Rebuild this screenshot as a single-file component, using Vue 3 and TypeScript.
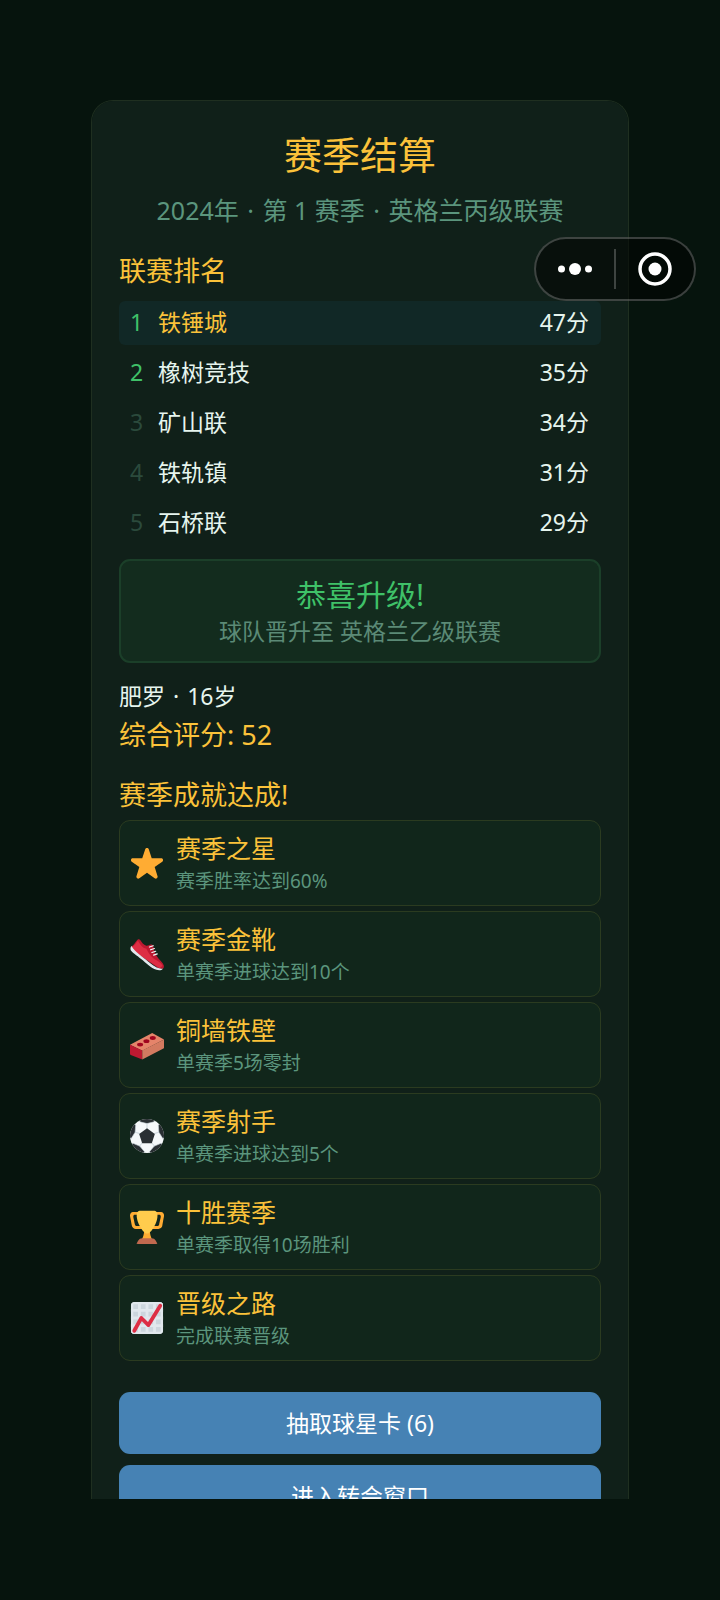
<script setup lang="ts">
interface Team {
  rank: number
  name: string
  points: number
}

interface Achievement {
  icon: 'star' | 'shoe' | 'brick' | 'ball' | 'trophy' | 'chart'
  title: string
  detail: string
}

const promotedPlaces = 2
const ownTeam = '铁锤城'

const teams: Team[] = [
  { rank: 1, name: '铁锤城', points: 47 },
  { rank: 2, name: '橡树竞技', points: 35 },
  { rank: 3, name: '矿山联', points: 34 },
  { rank: 4, name: '铁轨镇', points: 31 },
  { rank: 5, name: '石桥联', points: 29 },
]

const achievements: Achievement[] = [
  { icon: 'star', title: '赛季之星', detail: '赛季胜率达到60%' },
  { icon: 'shoe', title: '赛季金靴', detail: '单赛季进球达到10个' },
  { icon: 'brick', title: '铜墙铁壁', detail: '单赛季5场零封' },
  { icon: 'ball', title: '赛季射手', detail: '单赛季进球达到5个' },
  { icon: 'trophy', title: '十胜赛季', detail: '单赛季取得10场胜利' },
  { icon: 'chart', title: '晋级之路', detail: '完成联赛晋级' },
]

const gridLines = [2, 10, 18, 26, 34]
const patchAngles = [0, 72, 144, 216, 288]
</script>

<template>
  <div class="page">
    <main class="card">
      <h1 class="title">赛季结算</h1>
      <p class="subtitle">
        2024年 <span class="dot">·</span> 第 1 赛季 <span class="dot">·</span> 英格兰丙级联赛
      </p>

      <h2 id="standings-title" class="heading">联赛排名</h2>
      <table class="standings" aria-labelledby="standings-title">
        <tbody>
          <tr v-for="team in teams" :key="team.rank" :class="{ own: team.name === ownTeam }">
            <td class="rank" :class="{ promoted: team.rank <= promotedPlaces }">{{ team.rank }}</td>
            <td class="name">{{ team.name }}</td>
            <td class="points">{{ team.points }}分</td>
          </tr>
        </tbody>
      </table>

      <section class="promotion">
        <p class="promotion-title">恭喜升级!</p>
        <p class="promotion-text">球队晋升至 英格兰乙级联赛</p>
      </section>

      <p class="player">肥罗 <span class="dot">·</span> 16岁</p>
      <p class="rating">综合评分: 52</p>

      <h2 class="heading">赛季成就达成!</h2>
      <ul class="achievements">
        <li v-for="item in achievements" :key="item.title" class="achievement">
          <svg class="icon" viewBox="0 0 36 36" aria-hidden="true">
            <path
              v-if="item.icon === 'star'"
              fill="#ffac33"
              d="M27.287 34.627c-.404 0-.806-.124-1.152-.371L18 28.422l-8.135 5.834c-.343.247-.745.371-1.147.371-.408 0-.818-.127-1.166-.382-.69-.504-.981-1.396-.721-2.21l3.034-9.792-8.062-5.681c-.685-.505-.97-1.393-.708-2.203.264-.809 1.016-1.357 1.866-1.363L12.947 12.9l3.179-9.549c.268-.809 1.023-1.353 1.874-1.353.851 0 1.606.545 1.875 1.353L23 12.9l10.036.095c.853.005 1.605.554 1.869 1.363.262.81-.023 1.698-.709 2.203l-8.063 5.681 3.037 9.792c.261.814-.031 1.706-.72 2.21-.349.255-.757.383-1.163.383z"
            />
            <g v-else-if="item.icon === 'shoe'">
              <path
                fill="#be1931"
                d="M1.6 10C4 9 5.800 5 8 2.900c1-.9 2.200-.5 3 .6 1.400 2 3.200 5.200 6.300 5.700 2 .3 3.200-1.400 5.100-1.300 1.600.1 2.200 1.200 2.400 2.600.8 4.200 2.300 8.200 4.900 11.700 2 2.600 5 4.400 6 7.800.4 1.600.2 2.600-.8 3.600L30 33 2 13z"
              />
              <path
                fill="#dd2e44"
                d="M2 10.500C5 9.500 6.600 6 8.400 4c2 3.600 4.600 7.800 9 8.400 1.600 3.600 5 9 9.200 11.400 3.400 2 6.400 3.400 7.800 6.600l-2.800 2.800L5 16z"
              />
              <path
                fill="#e1e8ed"
                d="M1.700 9.600C.5 10.500.2 12.200.8 14c1.200 2.300 6.200 5.300 11 9.300 5.500 4.500 10.200 9.400 16.200 11.500 2.800.9 5.600.6 6.800-1.300-5 .6-10.500-3-15.300-7.200C13.500 21 4.300 15 1.700 9.600z"
              />
              <g fill="none" stroke="#f5f8fa" stroke-width="1.300" stroke-linecap="round">
                <path d="M20.600 10.600l4-1.300M21.800 13.500l4-1.300M23.200 16.400l4-1.300M25 19.200l3.800-1.300" />
              </g>
            </g>
            <g v-else-if="item.icon === 'brick'">
              <path fill="#e5846a" d="M0 17.800L23.500 5.200 36 12.200 13 24.200z" />
              <path fill="#be1931" d="M0 17.800l13 6V33.400L.8 28.500Q0 28.100 0 27.300z" />
              <path fill="#d37a60" d="M13 23.800l23-11.600v8.600q0 .6-.6.9L13 33.400z" />
              <g fill="#a0041e">
                <ellipse cx="10.700" cy="17.500" rx="3.200" ry="2" />
                <ellipse cx="17.400" cy="14" rx="3.200" ry="2" />
                <ellipse cx="24.100" cy="10.600" rx="3.200" ry="2" />
              </g>
            </g>
            <g v-else-if="item.icon === 'ball'">
              <clipPath id="ball-edge"><circle cx="18" cy="18" r="18" /></clipPath>
              <circle cx="18" cy="18" r="18" fill="#f5f8fa" />
              <g clip-path="url(#ball-edge)">
                <path
                  v-for="angle in patchAngles"
                  :key="angle"
                  fill="#292f33"
                  stroke="#ccd6dd"
                  stroke-width=".6"
                  :transform="`rotate(${angle} 18 18)`"
                  d="M18 11V4.800L10.500 3 9-3h18l-1.500 6L18 4.800z"
                />
                <path fill="#292f33" d="M18 9.700l8.300 6.100-3.200 9.800H12.900l-3.200-9.800z" />
              </g>
            </g>
            <g v-else-if="item.icon === 'trophy'">
              <path
                fill="#ffac33"
                d="M5.123 5h6C12.227 5 13 4.896 13 6V4c0-1.104-.773-2-1.877-2h-8c-2 0-3.583 2.125-3 5 0 0 1.791 9.375 1.917 9.958C2.373 18.500 4.164 20 6.081 20h6.958c1.105 0-.039-1.896-.039-3v-2c0 1.104-.773 2-1.877 2h-4c-1.104 0-1.833-1.042-2-2S3.539 7.667 3.539 7.667C3.206 5.750 4.018 5 5.123 5zm25.812 0h-6C23.831 5 22 4.896 22 6V4c0-1.104 1.831-2 2.935-2h8c2 0 3.584 2.125 3 5 0 0-1.633 9.419-1.771 10-.354 1.500-2.042 3-4 3h-7.146C21.914 20 22 18.104 22 17v-2c0 1.104 1.831 2 2.935 2h4c1.104 0 1.834-1.042 2-2s1.584-7.333 1.584-7.333C32.851 5.750 32.040 5 30.935 5zM15.100 20h5.800c0 8 3.200 12 3.200 12H11.900s3.200-4 3.200-12z"
              />
              <path
                fill="#ffcc4d"
                d="M7.100 6C7.100 2.400 8.200 1.100 11.100.9h14c2.900.2 4 1.500 4 5.100C29.100 13.200 22.300 25 18.100 25S7.100 13.200 7.100 6z"
              />
              <path fill="#c1694f" d="M28 36c.8 0 1-.5.700-1-1-1.600-1.700-5.200-5.700-5.200H13c-4 0-4.700 3.600-5.700 5.200-.3.500-.1 1 .7 1z" />
            </g>
            <g v-else>
              <clipPath id="chart-edge"><rect x="1" y="1" width="34" height="34" rx="4" /></clipPath>
              <g clip-path="url(#chart-edge)">
                <rect x="1" y="1" width="34" height="34" fill="#ccd6dd" />
                <g stroke="#e1e8ed" stroke-width="3">
                  <path v-for="at in gridLines" :key="at" :d="`M${at} 0v36M0 ${at}h36`" />
                </g>
              </g>
              <path
                fill="none"
                stroke="#dd2e44"
                stroke-width="4"
                stroke-linecap="round"
                stroke-linejoin="round"
                d="M4.500 31.500L12 18l7.500 7.500L32 5"
              />
            </g>
          </svg>
          <div>
            <h3 class="achievement-title">{{ item.title }}</h3>
            <p class="achievement-detail">{{ item.detail }}</p>
          </div>
        </li>
      </ul>

      <div class="actions">
        <button type="button" class="action">抽取球星卡 (6)</button>
        <button type="button" class="action">进入转会窗口</button>
      </div>
    </main>

    <div class="capsule">
      <button type="button" class="capsule-button" aria-label="更多">
        <svg width="36" height="16" viewBox="0 0 36 16" fill="#fff" aria-hidden="true">
          <circle cx="4.500" cy="8" r="3.500" />
          <circle cx="18" cy="8" r="6" />
          <circle cx="31.500" cy="8" r="3.500" />
        </svg>
      </button>
      <span class="capsule-divider"></span>
      <button type="button" class="capsule-button" aria-label="关闭">
        <svg width="36" height="36" viewBox="0 0 36 36" aria-hidden="true">
          <circle cx="18" cy="18" r="15" fill="none" stroke="#fff" stroke-width="3.500" />
          <circle cx="18" cy="18" r="6.500" fill="#fff" />
        </svg>
      </button>
    </div>
  </div>
</template>

<style>
body {
  margin: 0;
  background: #06140d;
}
</style>

<style scoped>
.page {
  box-sizing: border-box;
  position: relative;
  display: flex;
  flex-direction: column;
  height: 100vh;
  padding: 100px 91px 101px;
  background: #06140d;
  color: #e6f5ee;
  font-family: "Noto Sans", "Noto Sans CJK SC", sans-serif;
  font-size: 23px;
}

h1,
h2,
h3,
p,
ul {
  margin: 0;
  padding: 0;
  font-weight: 400;
}

.card {
  flex: 1;
  min-height: 0;
  overflow-y: auto;
  scrollbar-width: none;
  padding: 28px 27px;
  border: 1px solid #1f2f20;
  border-bottom: 0;
  border-radius: 22px 22px 0 0;
  background: #102019;
}

.title {
  color: #fbc23a;
  font-size: 38px;
  line-height: 50px;
  text-align: center;
}

.subtitle {
  margin: 14px 0 26px;
  color: #5b957d;
  font-size: 25px;
  line-height: 34px;
  text-align: center;
}

.dot {
  margin: 0 2px;
}

.heading {
  color: #fbc23a;
  font-size: 27px;
  line-height: 36px;
}

.standings {
  width: 100%;
  margin-top: 6px;
  border-collapse: separate;
  border-spacing: 0 6px;
  table-layout: fixed;
  line-height: 34px;
}

.standings td {
  padding: 4px 0 6px;
}

.standings .rank {
  width: 28px;
  padding-left: 11px;
  border-radius: 6px 0 0 6px;
  color: #2b4a3c;
}

.standings .promoted {
  color: #3fc168;
}

.standings .points {
  padding-right: 12px;
  border-radius: 0 6px 6px 0;
  text-align: right;
}

.own td {
  background: #112826;
}

.own .name {
  color: #fbc23a;
}

.promotion {
  margin-top: 8px;
  padding: 14px 12px;
  border: 2px solid #1b3f29;
  border-radius: 11px;
  background: #132c1e;
  text-align: center;
}

.promotion-title {
  color: #3fc168;
  font-size: 30px;
  line-height: 40px;
}

.promotion-text {
  color: #5b8a76;
  line-height: 32px;
}

.player {
  margin-top: 17px;
  line-height: 32px;
}

.rating {
  margin: 5px 0 24px;
  color: #fbc23a;
  font-size: 27px;
  line-height: 36px;
}

.achievements {
  display: grid;
  gap: 5px;
  margin-top: 7px;
  list-style: none;
}

.achievement {
  display: flex;
  align-items: center;
  gap: 12px;
  padding: 10px;
  border: 1px solid #2b3b20;
  border-radius: 11px;
  background: #11261b;
}

.icon {
  width: 34px;
  height: 34px;
}

.achievement-title {
  color: #fbc23a;
  font-size: 25px;
  line-height: 34px;
}

.achievement-detail {
  margin-top: 2px;
  color: #5b957d;
  font-size: 19px;
  line-height: 28px;
}

.actions {
  display: grid;
  gap: 11px;
  margin-top: 31px;
}

.action {
  padding: 14px;
  border: 0;
  border-radius: 11px;
  background: #4682b4;
  color: #fff;
  font: inherit;
  line-height: 34px;
}

.capsule {
  box-sizing: border-box;
  position: absolute;
  top: 237px;
  right: 24px;
  display: flex;
  align-items: center;
  width: 162px;
  height: 64px;
  border: 2px solid rgba(255, 255, 255, 0.22);
  border-radius: 32px;
  background: rgba(0, 0, 0, 0.5);
}

.capsule-button {
  display: flex;
  flex: 1;
  align-items: center;
  justify-content: center;
  height: 100%;
  padding: 0;
  border: 0;
  background: none;
}

.capsule-divider {
  width: 2px;
  height: 40px;
  background: rgba(255, 255, 255, 0.22);
}
</style>
